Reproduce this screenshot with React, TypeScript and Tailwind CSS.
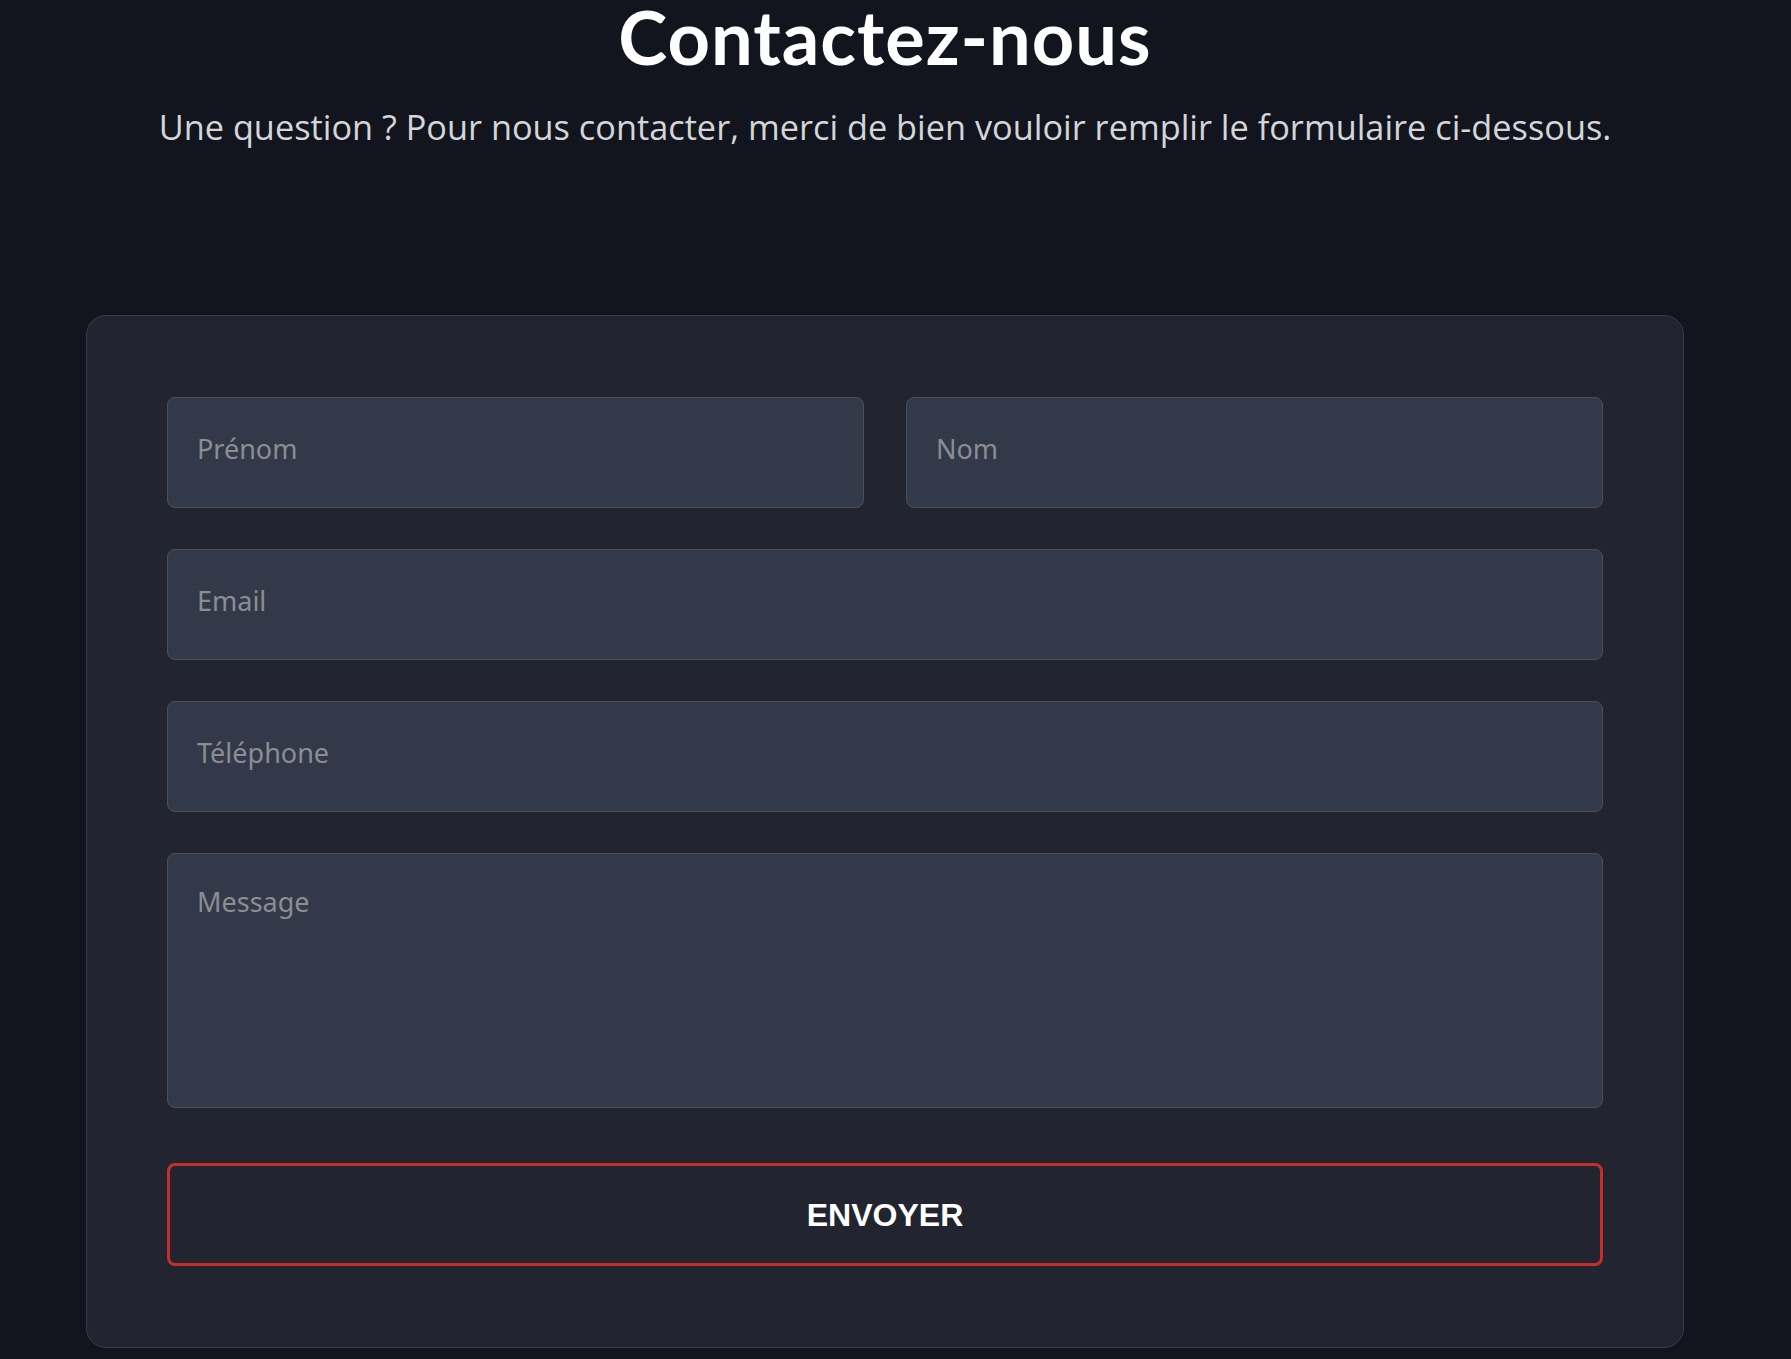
const Field = ({ placeholder, type = 'text' }: { placeholder: string; type?: string }) => (
  <input
    type={type}
    placeholder={placeholder}
    className="w-full h-[111px] px-[29px] pb-[9px] bg-[#323a4a] border border-[#4a4f5a] rounded-[8px] text-[27px] text-gray-200 placeholder:text-[#8b8d92] outline-none font-['Noto_Sans',sans-serif]"
  />
);

const App = () => {
  return (
    <div className="min-h-screen bg-[#12151d] pr-[21px]">
      {/* Header */}
      <div className="flex flex-col items-center pt-[5px]">
        <h1 className="text-[74px] leading-[64px] tracking-[1px] font-bold text-white font-['Lato',sans-serif]">
          Contactez-nous
        </h1>
        <p className="mt-[41px] text-[34.3px] leading-none text-[#d3d5d9] font-['Open_Sans',sans-serif]">
          Une question ? Pour nous contacter, merci de bien vouloir remplir le formulaire ci-dessous.
        </p>
      </div>

      {/* Form card */}
      <div className="mx-auto mt-[171px] w-[1598px] bg-[#22252f] border border-[#363d4c] rounded-[20px] px-[80px] pt-[81px] pb-[81px]">
        <form className="flex flex-col" onSubmit={(e) => e.preventDefault()}>
          <div className="grid grid-cols-2 gap-[42px]">
            <Field placeholder="Prénom" />
            <Field placeholder="Nom" />
          </div>
          <div className="mt-[41px]">
            <Field placeholder="Email" type="email" />
          </div>
          <div className="mt-[41px]">
            <Field placeholder="Téléphone" type="tel" />
          </div>
          <textarea
            placeholder="Message"
            className="mt-[41px] w-full h-[255px] px-[29px] pt-[28px] resize-none bg-[#323a4a] border border-[#4a4f5a] rounded-[8px] text-[27px] leading-[1.5] text-gray-200 placeholder:text-[#8b8d92] outline-none font-['Noto_Sans',sans-serif]"
          />
          <button
            type="submit"
            className="mt-[55px] w-full h-[103px] border-[3px] border-[#c42f2c] rounded-[8px] bg-transparent text-white text-[32px] font-bold font-['Liberation_Sans',Arial,sans-serif]"
          >
            ENVOYER
          </button>
        </form>
      </div>
    </div>
  );
};

export default App;
